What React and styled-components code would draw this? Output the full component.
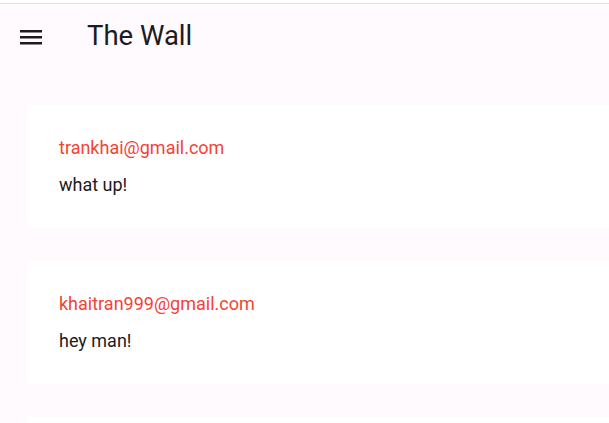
import React from "react";
import styled, { createGlobalStyle } from "styled-components";

const GlobalStyle = createGlobalStyle`
  html, body {
    margin: 0;
    padding: 0;
    background: #fffbfe;
    overflow: hidden;
  }
  body {
    font-family: Roboto, "Liberation Sans", sans-serif;
  }
`;

const Page = styled.div`
  width: 609px;
  height: 423px;
  background: #fefafe;
  border-top: 3px solid #ffffff;
  overflow: hidden;
  display: flex;
  flex-direction: column;
`;

const AppBar = styled.header`
  height: 64px;
  flex-shrink: 0;
  border-top: 1px solid #e2e0e2;
  display: flex;
  align-items: center;
  padding: 0 0 0 20px;
  gap: 45px;
  color: #1d1b20;
`;

const MenuButton = styled.button`
  width: 22px;
  height: 15px;
  margin-top: 2px;
  padding: 0;
  border: none;
  background: none;
  display: flex;
  color: #1d1b20;
`;

const Title = styled.h1`
  margin: 0 0 2px 0;
  font-size: 27.5px;
  font-weight: 400;
  letter-spacing: 0;
`;

const Feed = styled.main`
  display: flex;
  flex-direction: column;
  gap: 33px;
  padding: 37px 0 0 27px;
`;

const Card = styled.article`
  background: #ffffff;
  margin-right: -30px;
  height: 123px;
  box-sizing: border-box;
  padding: 32px 32px 0 32px;
  display: flex;
  flex-direction: column;
  gap: 16px;
  flex-shrink: 0;
`;

const Email = styled.div`
  color: #f44336;
  font-size: 18px;
  line-height: 21px;
`;

const Message = styled.div`
  color: #1d1b20;
  font-size: 18px;
  line-height: 21px;
`;

const MenuIcon = () => (
  <svg width="22" height="15" viewBox="0 0 22 15" fill="currentColor">
    <rect x="0" y="0" width="22" height="2.5" />
    <rect x="0" y="6" width="22" height="2.5" />
    <rect x="0" y="12" width="22" height="2.5" />
  </svg>
);

const posts = [
  { email: "trankhai@gmail.com", message: "what up!" },
  { email: "khaitran999@gmail.com", message: "hey man!" },
  { email: "", message: "" },
];

export default function App() {
  return (
    <>
      <GlobalStyle />
      <Page>
        <AppBar>
          <MenuButton>
            <MenuIcon />
          </MenuButton>
          <Title>The Wall</Title>
        </AppBar>
        <Feed>
          {posts.map((p, i) => (
            <Card key={i}>
              {p.email && <Email>{p.email}</Email>}
              {p.message && <Message>{p.message}</Message>}
            </Card>
          ))}
        </Feed>
      </Page>
    </>
  );
}
